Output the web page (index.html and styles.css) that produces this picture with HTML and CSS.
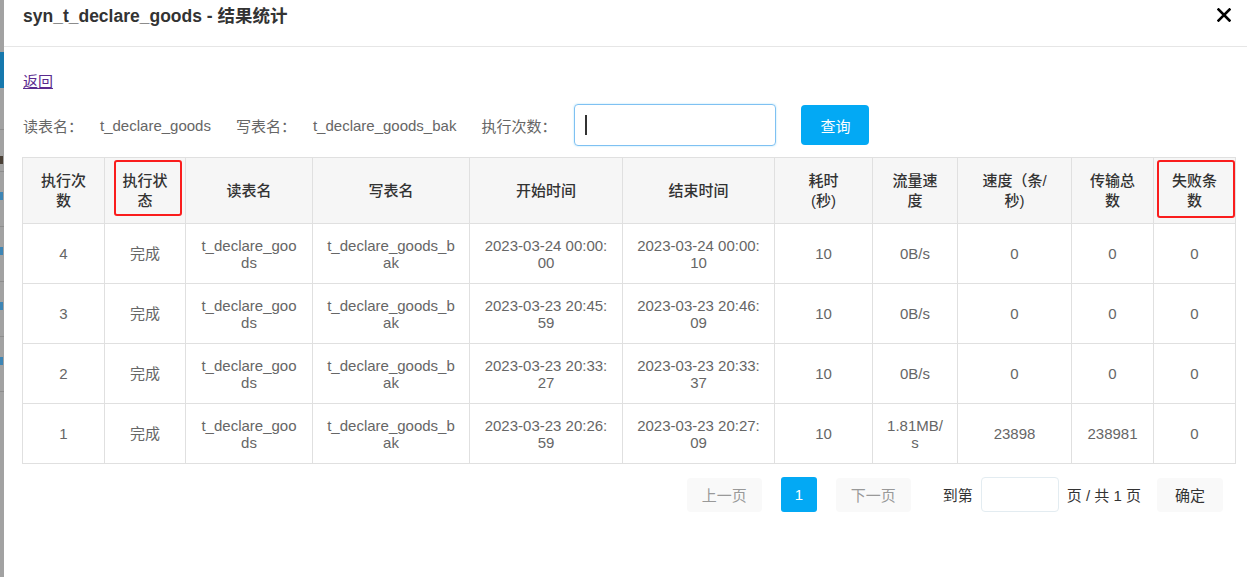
FILE: index.html
```html
<!DOCTYPE html>
<html lang="zh-CN">
<head>
<meta charset="utf-8">
<title>syn_t_declare_goods - 结果统计</title>
<link rel="stylesheet" href="styles.css">
</head>
<body>
<div class="page">
  <div class="backdrop">
    <div class="bd-gap1"></div>
    <div class="bd-blue"></div>
    <div class="bd-row"></div>
    <div class="bd-row"><span class="bd-frag dark"></span></div>
    <div class="bd-row tall"><span class="bd-frag"></span></div>
    <div class="bd-row tall"><span class="bd-frag"></span></div>
    <div class="bd-row tall"><span class="bd-frag"></span></div>
    <div class="bd-row tall"><span class="bd-frag"></span></div>
    <div class="bd-rest"></div>
  </div>
  <div class="modal">
    <div class="modal-head">
      <h1 class="modal-title">syn_t_declare_goods - 结果统计</h1>
      <button class="close" aria-label="关闭">
        <svg width="14" height="14" viewBox="0 0 14 14"><path d="M1.5 1.5 L12.5 12.5 M12.5 1.5 L1.5 12.5" stroke="#000" stroke-width="2.6" stroke-linecap="square"/></svg>
      </button>
    </div>
    <div class="modal-body">
      <a class="back" href="#">返回</a>
      <div class="filter">
        <span class="label">读表名：</span><span class="value">t_declare_goods</span>
        <span class="label">写表名：</span><span class="value">t_declare_goods_bak</span>
        <span class="label">执行次数：</span>
        <div class="input focused"><span class="caret"></span></div>
        <button class="btn-query">查询</button>
      </div>
      <table class="grid">
        <colgroup>
          <col style="width:82px"><col style="width:81px"><col style="width:127px"><col style="width:157px"><col style="width:153px"><col style="width:152px"><col style="width:98px"><col style="width:85px"><col style="width:114px"><col style="width:82px"><col style="width:82px">
        </colgroup>
        <thead>
          <tr>
            <th>执行次数</th>
            <th class="marked"><span class="mark m1"></span>执行状态</th>
            <th>读表名</th>
            <th>写表名</th>
            <th>开始时间</th>
            <th>结束时间</th>
            <th>耗时<br>(秒)</th>
            <th>流量速度</th>
            <th>速度（条/<br>秒)</th>
            <th>传输总数</th>
            <th class="marked"><span class="mark m2"></span>失败条数</th>
          </tr>
        </thead>
        <tbody>
          <tr><td>4</td><td>完成</td><td>t_declare_goods</td><td>t_declare_goods_bak</td><td>2023-03-24 00:00:00</td><td>2023-03-24 00:00:10</td><td>10</td><td>0B/s</td><td>0</td><td>0</td><td>0</td></tr>
          <tr><td>3</td><td>完成</td><td>t_declare_goods</td><td>t_declare_goods_bak</td><td>2023-03-23 20:45:59</td><td>2023-03-23 20:46:09</td><td>10</td><td>0B/s</td><td>0</td><td>0</td><td>0</td></tr>
          <tr><td>2</td><td>完成</td><td>t_declare_goods</td><td>t_declare_goods_bak</td><td>2023-03-23 20:33:27</td><td>2023-03-23 20:33:37</td><td>10</td><td>0B/s</td><td>0</td><td>0</td><td>0</td></tr>
          <tr><td>1</td><td>完成</td><td>t_declare_goods</td><td>t_declare_goods_bak</td><td>2023-03-23 20:26:59</td><td>2023-03-23 20:27:09</td><td>10</td><td>1.81MB/s</td><td>23898</td><td>238981</td><td>0</td></tr>
        </tbody>
      </table>
      <div class="pager">
        <button class="pg-btn disabled">上一页</button>
        <button class="pg-num">1</button>
        <button class="pg-btn disabled">下一页</button>
        <span class="pg-text">到第</span>
        <div class="pg-input"></div>
        <span class="pg-text">页 / 共 1 页</span>
        <button class="pg-btn ok">确定</button>
      </div>
    </div>
  </div>
</div>
</body>
</html>
```
FILE: styles.css
```css
* { box-sizing: border-box; }
html, body { margin: 0; padding: 0; }
body {
  font-family: "Liberation Sans", "Noto Sans CJK SC", sans-serif;
  font-size: 15px;
  color: #333;
  background: #fff;
}
.page {
  display: flex;
  width: 1247px;
  height: 577px;
  overflow: hidden;
}
.backdrop {
  width: 4px;
  flex: none;
  background: #a2a2a2;
  display: flex;
  flex-direction: column;
}
.bd-gap1 { height: 52px; }
.bd-blue { height: 36px; background: #1678ad; }
.bd-row { height: 42px; border-bottom: 1px solid #8e8e8e; position: relative; }
.bd-row.tall { height: 55px; }
.bd-frag {
  position: absolute;
  left: 0; top: 20px;
  width: 3px; height: 8px;
  background: #3d85b5;
}
.bd-frag.dark { background: #4a4036; top: 26px; }
.bd-rest { flex: 1; }

.modal {
  flex: 1;
  background: #fff;
  display: flex;
  flex-direction: column;
}
.modal-head {
  height: 47px;
  border-bottom: 1px solid #e6e6e6;
  display: flex;
  align-items: flex-start;
  justify-content: space-between;
  padding: 0 17px 0 19px;
}
.modal-title {
  margin: 0;
  font-size: 17.5px;
  font-weight: bold;
  line-height: 33px;
  color: #333;
}
.close {
  border: 0;
  background: none;
  padding: 0;
  margin-top: 8px;
  width: 14px;
  height: 14px;
  display: flex;
}
.modal-body {
  padding: 25px 12px 0 18px;
  display: flex;
  flex-direction: column;
  align-items: flex-start;
}
.back {
  margin-left: 1px;
  color: #5b2a8e;
  line-height: 20px;
  text-decoration: underline;
}
.filter {
  margin-top: 12px;
  margin-left: 1px;
  display: flex;
  align-items: center;
  height: 42px;
  color: #666;
}
.label { margin-right: 17px; }
.value { margin-right: 25px; }
.input {
  width: 202px;
  height: 42px;
  border: 1px solid #7fc1f2;
  border-radius: 4px;
  margin-left: 1px;
  box-shadow: 0 0 2px rgba(3, 169, 244, 0.35);
  display: flex;
  align-items: center;
  padding-left: 10px;
}
.caret {
  width: 2px;
  height: 20px;
  background: #333;
}
.btn-query {
  margin-left: 25px;
  width: 68px;
  height: 40px;
  border: 0;
  border-radius: 4px;
  background: #03a9f4;
  color: #fff;
  font-family: inherit;
  font-size: 15px;
}

.grid {
  margin-top: 11px;
  width: 1213px;
  table-layout: fixed;
  border-collapse: collapse;
}
.grid th, .grid td {
  border: 1px solid #e0e0e0;
  text-align: center;
  padding: 0 14px;
  word-break: break-all;
}
.grid th {
  height: 66px;
  background: #f6f6f6;
  font-weight: 500;
  color: #333;
  line-height: 20px;
}
.grid td {
  height: 60px;
  color: #666;
  line-height: 17px;
}
.grid th.marked { position: relative; }
.mark {
  position: absolute;
  border: 2px solid #fa1d1d;
  border-radius: 3px;
}
.m1 { left: 9px; top: 2px; width: 68px; height: 56px; }
.m2 { left: 3px; top: 2px; width: 78px; height: 58px; }

.pager {
  align-self: flex-end;
  margin-top: 13px;
  margin-right: 13px;
  display: flex;
  align-items: center;
  height: 35px;
}
.pg-btn {
  height: 34px;
  border: 0;
  border-radius: 4px;
  background: #f9f9f9;
  font-family: inherit;
  font-size: 15px;
  padding: 0;
}
.pg-btn.disabled { width: 75px; color: #999; }
.pg-btn.ok { width: 66px; color: #333; margin-left: 16px; }
.pg-num {
  width: 36px;
  height: 35px;
  margin: 0 19px;
  border: 0;
  border-radius: 3px;
  background: #03a9f4;
  color: #fff;
  font-family: inherit;
  font-size: 15px;
  padding: 0;
}
.pg-text { color: #333; }
.pg-btn + .pg-text { margin-left: 32px; }
.pg-input {
  width: 78px;
  height: 35px;
  margin: 0 8px;
  border: 1px solid #e3ecf1;
  border-radius: 4px;
  background: #fff;
}
```
